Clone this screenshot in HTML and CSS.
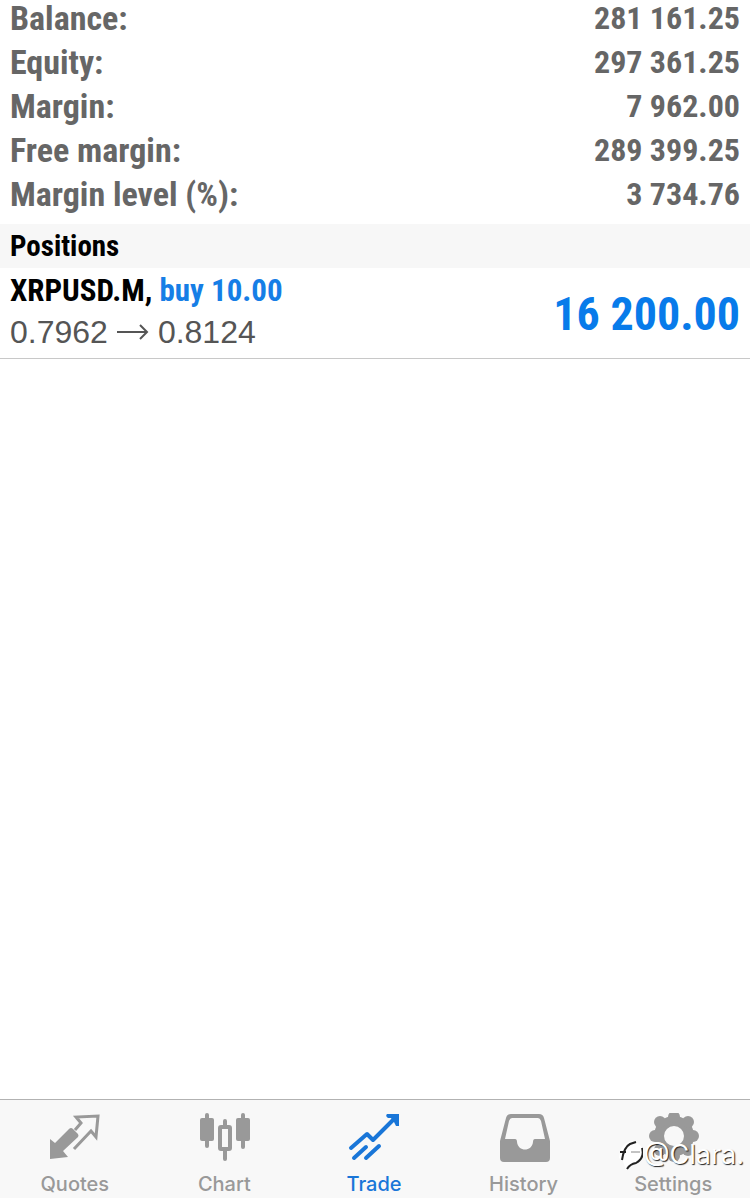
FILE: index.html
```html
<!DOCTYPE html>
<html lang="en">
<head>
<meta charset="utf-8">
<meta name="viewport" content="width=device-width, initial-scale=1">
<title>Trade</title>
<link rel="stylesheet" href="styles.css">
</head>
<body>
<main class="content">
  <dl class="summary">
    <div class="summary-row"><dt>Balance:</dt><dd>281 161.25</dd></div>
    <div class="summary-row"><dt>Equity:</dt><dd>297 361.25</dd></div>
    <div class="summary-row"><dt>Margin:</dt><dd>7 962.00</dd></div>
    <div class="summary-row"><dt>Free margin:</dt><dd>289 399.25</dd></div>
    <div class="summary-row"><dt>Margin level (%):</dt><dd>3 734.76</dd></div>
  </dl>
  <h2 class="section-title">Positions</h2>
  <article class="position">
    <div>
      <div class="position-name">XRPUSD.M, <span class="buy">buy 10.00</span></div>
      <div class="position-prices">
        <span>0.7962</span>
        <svg class="arrow" viewBox="0 0 32 16" aria-hidden="true"><path d="M0 8H30M23 1L30 8L23 15"/></svg>
        <span>0.8124</span>
      </div>
    </div>
    <div class="profit">16 200.00</div>
  </article>
</main>
<nav class="tabs">
  <a class="tab" href="#quotes">
    <svg class="icon" viewBox="0 0 52 52" aria-hidden="true">
      <path fill="currentColor" d="M1 26L6 30L20 16Q22 14 24 16L29 21Q30 23 29 24L14 38L19 44L1 46Z"/>
      <path fill="none" stroke="currentColor" stroke-width="3" d="M26 17L32 10L27 4L49 3L47 24L42 18L25 36"/>
    </svg>
    <span>Quotes</span>
  </a>
  <a class="tab" href="#chart">
    <svg class="icon" viewBox="0 0 52 52" aria-hidden="true">
      <g fill="currentColor"><rect x="2" y="5" width="14" height="23" rx="2"/><rect x="38" y="5" width="14" height="23" rx="2"/></g>
      <rect x="22" y="14" width="10" height="22" rx="1" fill="none" stroke="currentColor" stroke-width="4"/>
      <path fill="none" stroke="currentColor" stroke-width="4" stroke-linecap="round" d="M9 2V33M45 2V34M27 8V13M27 38V46"/>
    </svg>
    <span>Chart</span>
  </a>
  <a class="tab active" href="#trade" aria-current="page">
    <svg class="icon" viewBox="0 0 52 52" aria-hidden="true">
      <path fill="none" stroke="currentColor" stroke-width="4" stroke-linecap="round" stroke-linejoin="round" d="M3 35L19 21L25 27L48 4M6 45L18 34M18 45L31 33"/>
      <path fill="currentColor" d="M39 1H51V13L48 13L46 9L43 5H40Q37 3 39 1Z"/>
    </svg>
    <span>Trade</span>
  </a>
  <a class="tab" href="#history">
    <svg class="icon" viewBox="0 0 52 52" aria-hidden="true">
      <path fill="currentColor" fill-rule="evenodd" d="M13 1H41Q45 1 46 5L52 28V45Q52 49 48 49H6Q2 49 2 45V28L8 5Q9 1 13 1ZM14 5Q12 5 11 8L7 26H17Q19 26 19 29C20 39 34 39 35 29Q35 26 37 26H47L43 8Q42 5 40 5Z"/>
    </svg>
    <span>History</span>
  </a>
  <a class="tab" href="#settings">
    <svg class="icon" viewBox="0 0 52 52" aria-hidden="true">
      <g fill="none" stroke="currentColor"><circle cx="27" cy="23" r="15" stroke-width="10"/></g>
      <g fill="currentColor"><circle cx="27" cy="4" r="6"/><circle cx="41" cy="9" r="6"/><circle cx="46" cy="23" r="6"/><circle cx="41" cy="37" r="6"/><circle cx="27" cy="43" r="6"/><circle cx="13" cy="37" r="6"/><circle cx="8" cy="23" r="6"/><circle cx="13" cy="9" r="6"/></g>
    </svg>
    <span>Settings</span>
  </a>
  <div class="watermark">
    <svg class="mark" viewBox="0 0 26 30" aria-hidden="true">
      <path fill="#fff" d="M3 11Q6 3 14 1Q25 2 26 12Q25 20 18 24L9 30L6 21L2 18Z"/>
      <path fill="none" stroke="#222" stroke-width="2" d="M3 12H9M5 20Q7 7 13 4L19 2M25 8Q28 18 19 23Q13 24 10 29"/>
      <path fill="none" stroke="#888" d="M14 12H23"/>
    </svg>
    <span>@Clara.</span>
  </div>
</nav>
</body>
</html>
```
FILE: styles.css
```css
* { box-sizing: border-box; }

body {
  margin: 0;
  min-height: 100vh;
  display: flex;
  flex-direction: column;
  background: #fff;
  color: #000;
  font-family: "Roboto Condensed", "Liberation Sans Narrow", "Liberation Sans", sans-serif;
}

.content { flex: 1; }

.summary {
  display: grid;
  gap: 8px;
  margin: 0;
  padding: 0 10px 12px;
  color: #666;
  font-size: 34px;
  font-weight: 700;
  line-height: 36px;
}

.summary-row {
  display: flex;
  justify-content: space-between;
}

.summary dd {
  margin: 0;
  font-size: 32px;
}

.section-title {
  margin: 0;
  padding: 0 10px;
  background: #f7f7f7;
  font-size: 29px;
  line-height: 44px;
}

.position {
  display: flex;
  justify-content: space-between;
  align-items: center;
  padding: 2px 10px 6px;
  border-bottom: 1px solid #c8c8c8;
}

.position-name { font-size: 31px; font-weight: 700; line-height: 42px; }
.buy { color: #167ee6; }

.position-prices {
  display: flex;
  align-items: center;
  gap: 9px;
  color: #555;
  font-family: "Liberation Sans", Arial, sans-serif;
  font-size: 32px;
  line-height: 40px;
}

.arrow { width: 32px; height: 16px; fill: none; stroke: currentColor; stroke-width: 2; }

.profit {
  padding-top: 6px;
  color: #087bea;
  font-size: 46px;
  font-weight: 700;
  line-height: 60px;
}

.tabs {
  position: relative;
  display: grid;
  grid-template-columns: repeat(5, 1fr);
  padding: 13px 2px 2px 0;
  border-top: 1px solid #b2b2b2;
  background: #f8f8f8;
}

.tab {
  display: flex;
  flex-direction: column;
  align-items: center;
  gap: 7px;
  color: #999;
  font-family: Inter, Roboto, sans-serif;
  font-size: 20px;
  font-weight: 500;
  line-height: 24px;
  text-decoration: none;
}

.active { color: #1976d8; }
.icon { width: 52px; height: 52px; }

.watermark {
  position: absolute;
  right: 6px;
  bottom: 26px;
  display: flex;
  align-items: center;
  color: #fff;
  font-family: Inter, Roboto, sans-serif;
  font-size: 27px;
  line-height: 34px;
  text-shadow: 1px 1px 1px #222;
}

.mark { width: 26px; height: 30px; }
```
